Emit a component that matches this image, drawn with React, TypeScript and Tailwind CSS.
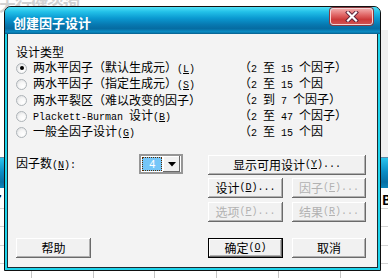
import React from "react";

// ascii runs are drawn in a 6px-wide mono so they sit like the old bitmap font
function Txt({ s }: { s: string }) {
  return (
    <>
      {s.split(/([\x20-\x7e]+)/).map((p, i) =>
        /^[\x20-\x7e]+$/.test(p) ? (
          <span key={i} className="font-['Liberation_Mono'] text-[10px] whitespace-pre">
            {p.split(/(&.)/).map((q, j) =>
              q.length === 2 && q[0] === "&" ? <u key={j}>{q[1]}</u> : q
            )}
          </span>
        ) : (
          <span key={i}>{p}</span>
        )
      )}
    </>
  );
}

function Radio({ checked }: { checked?: boolean }) {
  return (
    <span className="w-[11px] h-[11px] rounded-full border border-[#aeb4b8] bg-[radial-gradient(circle_at_65%_70%,#ffffff_0%,#f6f6f6_45%,#d6d8da_100%)] flex items-center justify-center shrink-0">
      {checked && <span className="w-[4px] h-[4px] rounded-full bg-black" />}
    </span>
  );
}

function Btn({
  label,
  w,
  disabled,
  def,
}: {
  label: string;
  w: string;
  disabled?: boolean;
  def?: boolean;
}) {
  return (
    <div
      className={`${w} h-[20px] flex items-center justify-center bg-[#f1f1f1] shadow-[inset_-1px_-1px_0_#6a6a6a,inset_1px_1px_0_#ffffff,inset_-2px_-2px_0_#b0b0b0] leading-[16px] ${
        def ? "border border-black" : ""
      } ${disabled ? "text-[#b2b2b2]" : "text-black"}`}
    >
      <Txt s={label} />
    </div>
  );
}

const rows = [
  { l: "两水平因子（默认生成元）(&L)", r: "（2 至 15 个因子）", on: true },
  { l: "两水平因子（指定生成元）(&S)", r: "（2 至 15 个因" },
  { l: "两水平裂区（难以改变的因子）", r: "（2 到 7 个因子）" },
  { l: "Plackett-Burman 设计(&B)", r: "（2 至 47 个因子）" },
  { l: "一般全因子设计(&G)", r: "（2 至 15 个因" },
];

export default function App() {
  return (
    <div className="relative w-[388px] h-[278px] overflow-hidden bg-white font-['Noto_Sans_CJK_SC',sans-serif] text-[12px] text-black">
      {/* things behind the dialog */}
      <div className="absolute left-[-1px] top-[-6px] text-[17px] leading-[20px] font-bold text-[#d2d2d2] tracking-[-1px]">
        天行健咨询
      </div>
      <div className="absolute left-[378px] top-[30px] w-[10px] h-[127px] bg-[#f0f0f0]" />
      <div className="absolute left-0 top-[157px] w-full h-[31px] border-t border-[#5a8aa8] bg-[linear-gradient(to_bottom,#2ac4ec,#0a8ec6_45%,#076fa4_80%,#0a86bc)]" />
      <div className="absolute left-0 top-[208px] w-full h-px bg-[#d4d4d4]" />
      <div className="absolute left-0 top-[226px] w-full h-px bg-[#d4d4d4]" />
      <div className="absolute left-0 top-[245px] w-full h-px bg-[#d4d4d4]" />
      <div className="absolute left-0 top-[263px] w-full h-px bg-[#d4d4d4]" />
      <div className="absolute left-[382px] top-[192px] text-[13px] font-bold leading-[16px]">B</div>
      <div className="absolute left-[-6px] top-[192px] text-[13px] font-bold leading-[16px]">7</div>
      {[31, 93, 154, 216, 278, 340].map((x) => (
        <div
          key={x}
          className="absolute top-[266px] w-px h-[12px] bg-[#c4c4c4]"
          style={{ left: x }}
        />
      ))}

      {/* dialog */}
      <div className="absolute left-[4px] top-[6px] w-[377px] h-[265px] border border-[#111] rounded-t-[7px] overflow-hidden bg-[#1fd4ec] flex flex-col">
        {/* title bar */}
        <div className="h-[27px] shrink-0 flex items-start bg-[linear-gradient(to_bottom,#52e0f6_0%,#22c0e8_18%,#0a98d0_42%,#0778b0_66%,#066ca2_80%,#0a8cc4_92%,#065c8a_100%)]">
          <span className="ml-[8px] mt-[7px] leading-[18px] text-[13px] font-bold text-white">
            创建因子设计
          </span>
          <div className="ml-auto mr-[7px] mt-[1px] w-[43px] h-[17px] rounded-[3px] border border-[#f6d4d4] shadow-[0_0_0_1px_#8a3a40] bg-[linear-gradient(to_bottom,#f2a8a8,#e06666_40%,#cc3a3a_70%,#d05050)] flex items-center justify-center">
            <svg width="14" height="11" viewBox="0 0 14 11">
              <path d="M3 1.5 L11 9.5 M11 1.5 L3 9.5" stroke="#5a2038" strokeWidth="4" strokeLinecap="square" />
              <path d="M3 1.5 L11 9.5 M11 1.5 L3 9.5" stroke="#ffffff" strokeWidth="2.2" strokeLinecap="square" />
            </svg>
          </div>
        </div>

        {/* client area */}
        <div className="flex-1 mx-[2px] mb-[2px] border-x border-b border-[#1c2a30] bg-[#f3f3f3] pl-[8px] pt-[10px] flex flex-col">
          <div className="h-[16px] leading-[16px]">设计类型</div>
          {rows.map((r, i) => (
            <div key={i} className="h-[16px] leading-[16px] flex items-center whitespace-nowrap">
              <Radio checked={r.on} />
              <span className="ml-[6px] w-[206px]">
                <Txt s={r.l} />
              </span>
              <span>
                <Txt s={r.r} />
              </span>
            </div>
          ))}

          <div className="mt-[14px] flex items-start">
            <div className="w-[192px] h-[20px] flex items-center">
              <span className="w-[123px] leading-[16px]">
                <Txt s="因子数(&N):" />
              </span>
              <div className="w-[44px] h-[20px] border-2 border-[#969696] bg-white p-px flex items-center">
                <div className="w-[21px] h-[14px] bg-[#74c6f8] border border-dotted border-[#5a2a00] flex items-center justify-center text-white font-['Liberation_Sans'] text-[11px] leading-[12px]">
                  4
                </div>
                <div className="ml-px w-[17px] h-[16px] bg-[#f1f1f1] shadow-[inset_-1px_-1px_0_#6a6a6a,inset_1px_1px_0_#ffffff] flex items-center justify-center">
                  <svg width="8" height="5" viewBox="0 0 8 5">
                    <path d="M0 0 H8 L4 4.5 Z" fill="#000" />
                  </svg>
                </div>
              </div>
            </div>
            <div className="w-[158px] flex flex-col">
              <div className="mt-px">
                <Btn w="w-[158px]" label="显示可用设计(&Y)..." />
              </div>
              <div className="mt-[3px] flex gap-[9px]">
                <Btn w="w-[75px]" label="设计(&D)..." />
                <Btn w="w-[74px]" label="因子(&F)..." disabled />
              </div>
              <div className="mt-[4px] flex gap-[9px]">
                <Btn w="w-[75px]" label="选项(&P)..." disabled />
                <Btn w="w-[74px]" label="结果(&R)..." disabled />
              </div>
            </div>
          </div>

          <div className="mt-[16px] flex items-start">
            <div className="w-[192px]">
              <Btn w="w-[75px]" label="帮助" />
            </div>
            <div className="flex gap-[9px]">
              <Btn w="w-[75px]" label="确定(&O)" def />
              <Btn w="w-[74px]" label="取消" />
            </div>
          </div>
        </div>
      </div>
    </div>
  );
}
